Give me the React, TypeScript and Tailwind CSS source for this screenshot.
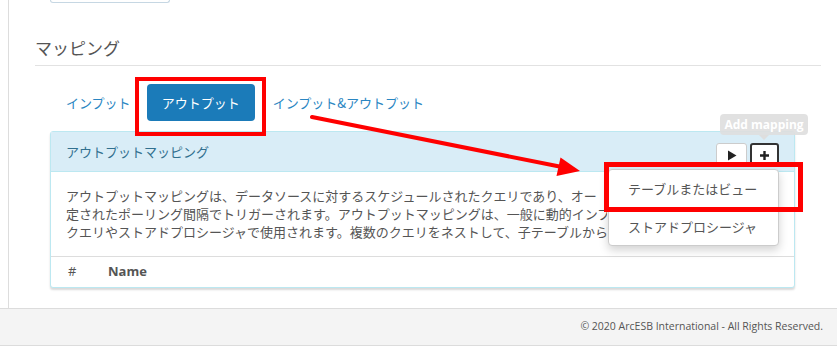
import React from "react";

const jp = "font-['Meiryo','Noto_Sans_CJK_JP',sans-serif]";

function Tabs() {
  return (
    <div className="mt-[18px] ml-[15px] flex items-center h-[37px] text-[13px]">
      <span className="px-[16px] text-[#2a86c2]">インプット</span>
      <span className="h-[37px] px-[15px] flex items-center rounded-[4px] bg-[#1b7bb9] text-white text-[13px]">
        アウトプット
      </span>
      <span className="pl-[18px] text-[#2a86c2]">インプット&amp;アウトプット</span>
    </div>
  );
}

function MappingPanel() {
  return (
    <div className="mt-[10px] ml-[15px] mr-[26px] border border-[#bce8f1] rounded-[3px] bg-white shadow-[0_2px_2px_rgba(0,0,0,0.15)]">
      <div className="h-[40px] flex items-center justify-between pl-[15px] pr-[15px] bg-[#d9edf7] border-b border-[#bce8f1]">
        <span className="text-[13px] text-[#31708f]">アウトプットマッピング</span>
        <div className="flex gap-[3px] mt-[7px]">
          <button className="w-[31px] h-[24px] flex items-center justify-center bg-white border border-[#ccc] rounded-[3px]">
            <svg width="10" height="11" viewBox="0 0 10 11">
              <path d="M1 0.5 L9.5 5.5 L1 10.5 Z" fill="#222" />
            </svg>
          </button>
          <button className="w-[29px] h-[24px] flex items-center justify-center bg-white border-2 border-[#333] rounded-[3px]">
            <svg width="11" height="11" viewBox="0 0 11 11">
              <path d="M5.5 1 V10 M1 5.5 H10" stroke="#222" strokeWidth="2.4" />
            </svg>
          </button>
        </div>
      </div>
      <div className="px-[15px] pt-[15px] pb-[15px] border-b border-[#ddd]">
        {/* the rest of each line sits under the open dropdown */}
        <p className="w-[541px] overflow-hidden whitespace-nowrap text-[13px] leading-[18px] text-[#555]">
          アウトプットマッピングは、データソースに対するスケジュールされたクエリであり、オー
          <br />
          定されたポーリング間隔でトリガーされます。アウトプットマッピングは、一般に動的インプ
          <br />
          クエリやストアドプロシージャで使用されます。複数のクエリをネストして、子テーブルから
        </p>
      </div>
      <div className="h-[30px] flex items-center text-[13px] text-[#555] font-['Open_Sans',sans-serif]">
        <span className="w-[57px] pl-[17px]">#</span>
        <span className="font-bold">Name</span>
      </div>
    </div>
  );
}

function Overlays() {
  return (
    <>
      {/* tooltip */}
      <div className="absolute left-[720px] top-[114px] w-[88px] h-[21px] rounded-[4px] bg-[#dedede]/90 flex items-center justify-center text-white text-[12px] font-bold font-['Open_Sans',sans-serif]">
        Add mapping
      </div>
      <div className="absolute left-[759px] top-[135px] w-0 h-0 border-x-[5px] border-x-transparent border-t-[5px] border-t-[#dedede]" />

      {/* dropdown */}
      <div className="absolute left-[608px] top-[169px] w-[171px] bg-white border border-[#ccc] rounded-[4px] shadow-[0_4px_10px_rgba(0,0,0,0.18)] text-[13px] text-[#555]">
        <div className="h-[37px] flex items-center pl-[19px]">テーブルまたはビュー</div>
        <div className="h-px bg-[#e3e3e3]" />
        <div className="h-[37px] flex items-center pl-[19px]">ストアドプロシージャ</div>
      </div>

      {/* annotations */}
      <div className="absolute left-[135px] top-[77px] w-[131px] h-[59px] border-4 border-[#ff0000]" />
      <div className="absolute left-[604px] top-[162px] w-[199px] h-[50px] border-[5px] border-[#ff0000]" />
      <svg className="absolute left-0 top-0" width="837" height="347">
        <line x1="312" y1="117" x2="562" y2="167" stroke="#ff0000" strokeWidth="4" strokeLinecap="round" />
        <polygon points="580,171 560.5,157.5 556.5,176" fill="#ff0000" />
      </svg>
    </>
  );
}

export default function App() {
  return (
    <div className={`relative w-[837px] h-[347px] overflow-hidden bg-white ${jp}`}>
      <div className="flex h-[308px]">
        <div className="w-[9px] shrink-0 border-r border-[#ddd]" />
        <div className="flex-1 pl-[26px] pr-[16px]">
          <div className="ml-[15px] w-[120px] h-[3px] border-x border-b border-[#c6d7e3] rounded-b-[4px]" />
          <h4 className="mt-[33px] pb-[5px] border-b border-[#e2e2e2] text-[17px] leading-[24px] text-[#555]">
            マッピング
          </h4>
          <Tabs />
          <MappingPanel />
        </div>
      </div>
      <footer className="h-[38px] bg-[#f4f4f4] border-t border-b border-[#dcdcdc] flex items-center justify-end pr-[14px] text-[10.5px] text-[#555] font-['Open_Sans',sans-serif]">
        © 2020 ArcESB International - All Rights Reserved.
      </footer>
      <Overlays />
    </div>
  );
}
